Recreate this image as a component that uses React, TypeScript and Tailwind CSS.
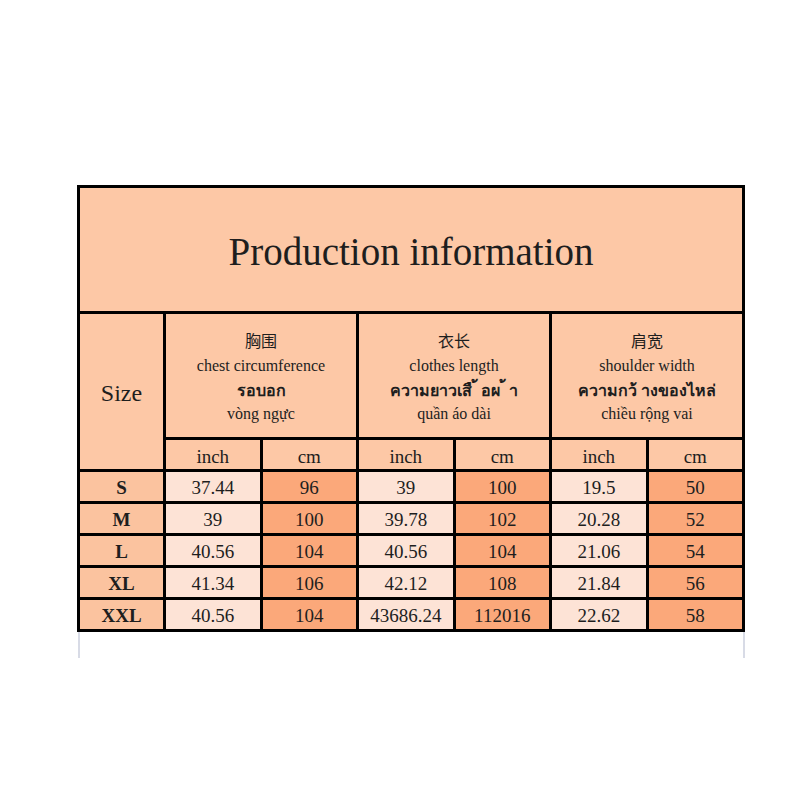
import React from "react";

const serif = { fontFamily: '"Liberation Serif", "Noto Sans CJK SC", serif' };

const rows = [
  ["S", "37.44", "96", "39", "100", "19.5", "50"],
  ["M", "39", "100", "39.78", "102", "20.28", "52"],
  ["L", "40.56", "104", "40.56", "104", "21.06", "54"],
  ["XL", "41.34", "106", "42.12", "108", "21.84", "56"],
  ["XXL", "40.56", "104", "43686.24", "112016", "22.62", "58"],
];

const groups = [
  { zh: "胸围", en: "chest circumference", th: "รอบอก", vi: "vòng ngực" },
  { zh: "衣长", en: "clothes length", th: "ความยาวเสื ้ อผ ้ า", vi: "quần áo dài" },
  { zh: "肩宽", en: "shoulder width", th: "ความกว้ างของไหล่", vi: "chiều rộng vai" },
];

export default function App() {
  return (
    <div className="min-h-[800px] w-[800px] bg-white pt-[185px] pl-[77px] text-[#1e1e1e] font-['Liberation_Serif',serif]">
      <div className="grid w-[668px] grid-cols-[83px_repeat(6,minmax(0,1fr))] grid-rows-[123px_123px_29px_repeat(5,29px)] gap-[3px] bg-black p-[3px]">
        <div className="col-span-7 flex items-center justify-center bg-[#fdc8a6] pt-[3px] text-[39px] leading-none">
          Production information
        </div>
        <div className="row-span-2 flex items-center justify-center bg-[#fdc8a6] pt-[2px] text-[24px]">
          Size
        </div>
        {groups.map((g) => (
          <div
            key={g.en}
            className="col-span-2 flex flex-col items-center justify-center bg-[#fdc8a6] pt-[4px] leading-[24px]"
          >
            <div className="text-[16px]" style={serif}>{g.zh}</div>
            <div className="text-[16px]">{g.en}</div>
            <div className="text-[16px] font-bold font-['Noto_Sans','DejaVu_Sans',sans-serif]">{g.th}</div>
            <div className="text-[16px]">{g.vi}</div>
          </div>
        ))}
        {["inch", "cm", "inch", "cm", "inch", "cm"].map((u, i) => (
          <div key={i} className="flex items-center justify-center bg-[#fdc8a6] pt-[3px] text-[19px] leading-none">
            {u}
          </div>
        ))}
        {rows.map((r) =>
          r.map((v, i) => (
            <div
              key={r[0] + i}
              className={
                "flex items-center justify-center pt-[1px] text-[19px] leading-none " +
                (i === 0
                  ? "bg-[#fbc39f] font-bold"
                  : i % 2 === 1
                  ? "bg-[#fde3d6]"
                  : "bg-[#fba87a]")
              }
            >
              {v}
            </div>
          ))
        )}
      </div>
      <div className="ml-[1px] h-[26px] w-[667px] border-x-2 border-[#d8dbe6]" />
    </div>
  );
}
